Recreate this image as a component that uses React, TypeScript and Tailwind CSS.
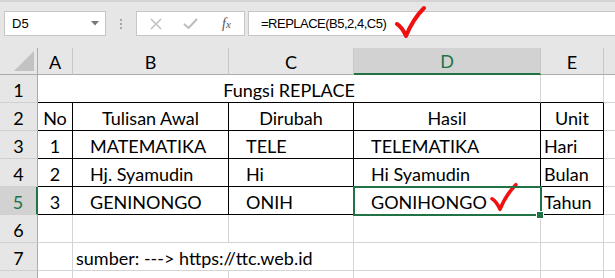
import type { ReactNode } from "react";

type Edge = "g" | "k";
type Align = "c" | "i" | "l";

const rightEdge: Record<Edge, string> = {
  g: "border-r-[#d4d4d4]",
  k: "border-r-black",
};
const bottomEdge: Record<Edge, string> = {
  g: "border-b-[#d4d4d4]",
  k: "border-b-black",
};
const alignCls: Record<Align, string> = {
  c: "justify-center",
  i: "pl-[17px]",
  l: "pl-[3px]",
};

function Cell({
  children,
  r = "g",
  b = "g",
  align = "l",
  className = "",
}: {
  children?: ReactNode;
  r?: Edge;
  b?: Edge;
  align?: Align;
  className?: string;
}) {
  return (
    <div
      className={`relative flex items-end whitespace-nowrap bg-white border-r border-b ${rightEdge[r]} ${bottomEdge[b]} ${alignCls[align]} ${className}`}
    >
      <span className="leading-[23px]">{children}</span>
    </div>
  );
}

function RowHead({ n, active = false }: { n?: number; active?: boolean }) {
  return (
    <div
      className={`flex items-end justify-center border-b border-b-[#d0d0d0] ${
        active
          ? "bg-[#d2d2d2] text-[#217346] border-r-2 border-r-[#217346]"
          : "bg-[#e6e6e6] border-r border-r-[#ababab]"
      }`}
    >
      {n !== undefined && <span className="leading-[23px]">{n}</span>}
    </div>
  );
}

function ColHead({ label, active = false }: { label?: string; active?: boolean }) {
  return (
    <div
      className={`flex items-end justify-center border-r border-r-[#c8c8c8] ${
        active
          ? "bg-[#d2d2d2] text-[#217346] border-b-2 border-b-[#217346]"
          : "bg-[#e6e6e6] border-b border-b-[#ababab]"
      }`}
    >
      {label && <span className="leading-[23px]">{label}</span>}
    </div>
  );
}

function RedCheck({ className }: { className: string }) {
  return (
    <svg className={`absolute ${className}`} viewBox="0 0 32 34" fill="none">
      <path
        d="M3 19 Q8 22 12 31 Q19 14 30 3"
        stroke="#f01010"
        strokeWidth="4"
        strokeLinecap="round"
        strokeLinejoin="round"
      />
    </svg>
  );
}

const rows: [string, string, string, string, string][] = [
  ["1", "MATEMATIKA", "TELE", "TELEMATIKA", "Hari"],
  ["2", "Hj. Syamudin", "Hi", "Hi Syamudin", "Bulan"],
  ["3", "GENINONGO", "ONIH", "GONIHONGO", "Tahun"],
];

export default function App() {
  return (
    <div className="relative w-[615px] h-[278px] overflow-hidden bg-[#e6e6e6] text-black font-['Lato','Liberation_Sans',sans-serif]">
      <div className="h-[2px] bg-[#d4d4d4]" />

      {/* formula bar */}
      <div className="flex items-center pt-[8px] h-[35px] font-['Liberation_Sans',sans-serif]">
        <div className="ml-[4px] w-[102px] h-[25px] flex items-center justify-between bg-white border border-[#c6c6c6] pl-[7px] pr-[6px] text-[13px]">
          <span>D5</span>
          <svg width="8" height="5" viewBox="0 0 8 5">
            <path d="M0 0 H8 L4 4.5 Z" fill="#777" />
          </svg>
        </div>
        <div className="w-[30px] flex flex-col items-center gap-[2px]">
          <span className="w-[2px] h-[2px] bg-[#a8a8a8]" />
          <span className="w-[2px] h-[2px] bg-[#a8a8a8]" />
          <span className="w-[2px] h-[2px] bg-[#a8a8a8]" />
        </div>
        <div className="w-[109px] h-[25px] flex items-center bg-white border border-[#c6c6c6] pl-[13px]">
          <svg width="12" height="12" viewBox="0 0 12 12">
            <path d="M1 1 L11 11 M11 1 L1 11" stroke="#bdbdbd" strokeWidth="1.4" />
          </svg>
          <svg className="ml-[21px]" width="15" height="11" viewBox="0 0 15 11">
            <path d="M1 6 L5.5 10 L14 1" stroke="#bdbdbd" strokeWidth="2" fill="none" />
          </svg>
          <span className="ml-[24px] text-[14px] italic text-[#555] font-['Liberation_Serif',serif]">
            f<span className="text-[11px]">x</span>
          </span>
        </div>
        <div className="ml-[3px] flex-1 h-[25px] flex items-center bg-white border border-[#c6c6c6] -mr-[4px] pl-[12px] text-[13px] tracking-[-0.5px]">
          =REPLACE(B5,2,4,C5)
        </div>
      </div>

      {/* sheet */}
      <div className="mt-[11px] grid grid-cols-[38px_35px_156px_125px_187px_63px_60px] grid-rows-[27px_repeat(8,28px)] text-[18px]">
        <div className="relative bg-[#e6e6e6] border-r border-b border-r-[#ababab] border-b-[#ababab]">
          <svg className="absolute right-[3px] bottom-[3px]" width="20" height="20" viewBox="0 0 20 20">
            <path d="M20 0 V20 H0 Z" fill="#c2c2c2" />
          </svg>
        </div>
        <ColHead label="A" />
        <ColHead label="B" />
        <ColHead label="C" />
        <ColHead label="D" active />
        <ColHead label="E" />
        <ColHead />

        {/* row 1 */}
        <RowHead n={1} />
        <Cell b="k" align="c" className="col-span-4">
          Fungsi REPLACE
        </Cell>
        <Cell b="k" />
        <Cell />

        {/* row 2 */}
        <RowHead n={2} />
        <Cell r="k" b="k" align="c">No</Cell>
        <Cell r="k" b="k" align="c">Tulisan Awal</Cell>
        <Cell r="k" b="k" align="c">Dirubah</Cell>
        <Cell r="k" b="k" align="c">Hasil</Cell>
        <Cell r="k" b="k" align="c">Unit</Cell>
        <Cell />

        {rows.map((row, i) => (
          <div key={i} className="contents">
            <RowHead n={i + 3} active={i === 2} />
            <Cell r="k" b="k" align="c">{row[0]}</Cell>
            <Cell r="k" b="k" align="i">{row[1]}</Cell>
            <Cell r="k" b="k" align="i">{row[2]}</Cell>
            <Cell r="k" b="k" align="i">
              {row[3]}
              {i === 2 && (
                <>
                  <span className="absolute -left-[1px] -top-[1px] w-[189px] h-[30px] border-2 border-[#217346] z-10" />
                  <span className="absolute -right-[3px] -bottom-[4px] w-[6px] h-[6px] bg-[#217346] outline outline-1 outline-white z-20" />
                </>
              )}
            </Cell>
            <Cell r="k" b="k" align="l">{row[4]}</Cell>
            <Cell />
          </div>
        ))}

        {/* row 6 */}
        <RowHead n={6} />
        <Cell />
        <Cell />
        <Cell />
        <Cell />
        <Cell />
        <Cell />

        {/* row 7 */}
        <RowHead n={7} />
        <Cell />
        <Cell className="col-span-2">sumber: ---&gt; https://ttc.web.id</Cell>
        <Cell />
        <Cell />
        <Cell />

        {/* row 8, only its top shows */}
        <RowHead />
        <Cell />
        <Cell />
        <Cell />
        <Cell />
        <Cell />
        <Cell />
      </div>

      <RedCheck className="left-[394px] top-[5px] w-[32px] h-[34px]" />
      <RedCheck className="left-[489px] top-[182px] w-[29px] h-[30px]" />
    </div>
  );
}
